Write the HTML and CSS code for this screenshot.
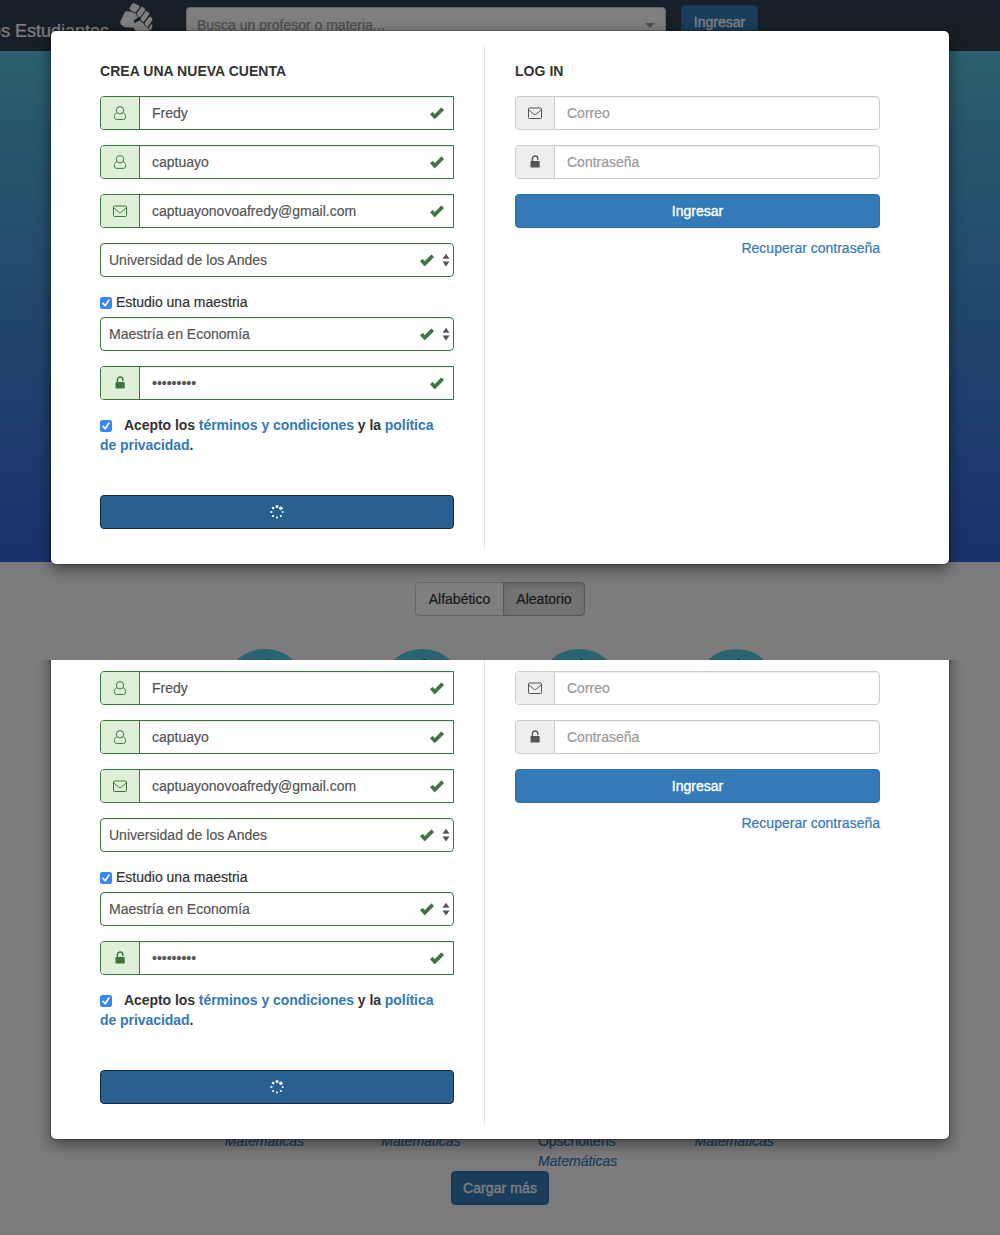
FILE: index.html
```html
<!DOCTYPE html>
<html lang="es">
<head>
<meta charset="utf-8">
<title>Los Estudiantes</title>
<link rel="stylesheet" href="styles.css">
</head>
<body>
<svg class="defs" width="0" height="0" aria-hidden="true">
  <symbol id="user" viewBox="0 0 14 14"><path d="M3.700 6.700C2 7.300 1.400 8.900 1.400 10.900c0 1.500.8 2.500 2.200 2.500h6.800c1.400 0 2.200-1 2.200-2.500 0-2-.6-3.600-2.300-4.200" fill="none" stroke="currentColor"/><circle cx="7" cy="4.300" r="3.700" fill="none" stroke="currentColor"/></symbol>
  <symbol id="mail" viewBox="0 0 14 14"><rect x=".5" y="2" width="13" height="10.500" rx=".9" fill="none" stroke="currentColor"/><path d="M.7 3.600c1.600 1.900 3.200 3 4.800 4.300 1.100.9 1.900.9 3 0 1.600-1.300 3.200-2.400 4.800-4.300" fill="none" stroke="currentColor"/></symbol>
  <symbol id="lock" viewBox="0 0 14 14"><rect x="2.500" y="6" width="9.200" height="6.600" rx=".7" fill="currentColor"/><path d="M4.400 6.500V3.700a2.700 2.700 0 0 1 5.400 0v.9" fill="none" stroke="currentColor" stroke-width="1.400" stroke-linecap="round"/></symbol>
  <symbol id="ok" viewBox="0 0 14 14"><path d="M.4 8.300 2.500 6.200l2.400 2.200L11.400 1.800l2.300 2.200-9 9.100z" fill="currentColor" stroke="currentColor" stroke-width=".7" stroke-linejoin="round"/></symbol>
  <symbol id="sort" viewBox="0 0 8 14"><path d="M.5 5.800 4 .8l3.500 5zM.5 8.400 4 13.400l3.500-5z" fill="#555"/></symbol>
  <symbol id="box" viewBox="0 0 12 12"><rect width="12" height="12" rx="2.500" fill="#3b86f7"/><path d="m3 6.400 2.200 2.400L9 3" fill="none" stroke="#fff" stroke-width="1.600" stroke-linecap="round" stroke-linejoin="round"/></symbol>
  <symbol id="spin" viewBox="0 0 14 14"><g fill="#fff"><circle cx="7" cy="1.600" r="1.500"/><circle cx="10.900" cy="3.200" r="1.800"/><circle cx="12.700" cy="7" r="1"/><circle cx="10.900" cy="11" r="1"/><circle cx="7" cy="12.600" r="1"/><circle cx="3.100" cy="11" r="1.100"/><circle cx="1.400" cy="7" r="1.100"/><circle cx="3.100" cy="3.100" r="1.300"/></g></symbol>
</svg>

<section class="screen first">
  <header class="nav">
    <div class="brand">Los Estudiantes</div>
    <svg class="fist" viewBox="360 6 99 99"><g fill="#fff" stroke="#303e4e" stroke-width="2.500">
      <path d="M380 32l12 2 13 4 11 3q6 4 1 10l-15 11 2 6 15-8 28 22q7 7 3 13l-6 12h-29l-15-23-23-1q-16-5-18-17l12-25q3-8 9-9z"/>
      <path d="M389 30q-3-4 0-8l6-11q4-5 9-2l13 7q4 3 2 7l-10 14q-4 4-8 1z"/>
      <path d="M411 37l11-15q3-4 7-2l5 4q4 3 2 7l-14 20q-3 3-6 0l-5-4q-3-4 0-10z"/>
      <path d="M423 51l12-17q3-4 7-1l5 4q4 3 1 7l-15 21q-3 4-6 1l-5-5q-3-4 1-10z"/>
      <path d="M434 67l12-16q3-4 7-1l3 3q4 3 2 8l-12 18q-3 4-6 1l-5-4q-4-4-1-9z"/>
      <path d="M446 82l8-11q4 0 5 6l-4 12q-4 4-7 0l-4-3z"/>
    </g></svg>
    <div class="search"><span>Busca un profesor o materia...</span><i class="caret"></i></div>
    <div class="btn blue">Ingresar</div>
  </header>
  <div class="hero"></div>
  <div class="order"><span class="tab">Alfabético</span><span class="tab active">Aleatorio</span></div>
  <div class="avatars"><i></i><i></i><i></i><i></i></div>
  <div class="backdrop"></div>
  <div class="modal">
    <form class="signup">
      <h4>CREA UNA NUEVA CUENTA</h4>
      <div class="field valid"><b><svg><use href="#user"/></svg></b><span>Fredy</span><svg class="ok"><use href="#ok"/></svg></div>
      <div class="field valid"><b><svg><use href="#user"/></svg></b><span>captuayo</span><svg class="ok"><use href="#ok"/></svg></div>
      <div class="field valid"><b><svg><use href="#mail"/></svg></b><span>captuayonovoafredy@gmail.com</span><svg class="ok"><use href="#ok"/></svg></div>
      <div class="select"><span>Universidad de los Andes</span><svg class="ok"><use href="#ok"/></svg><svg class="sort"><use href="#sort"/></svg></div>
      <div class="check"><svg><use href="#box"/></svg>Estudio una maestria</div>
      <div class="select"><span>Maestría en Economía</span><svg class="ok"><use href="#ok"/></svg><svg class="sort"><use href="#sort"/></svg></div>
      <div class="field valid"><b><svg><use href="#lock"/></svg></b><span>•••••••••</span><svg class="ok"><use href="#ok"/></svg></div>
      <p class="terms"><svg><use href="#box"/></svg>Acepto los <a>términos y condiciones</a> y la <a>política<br>de privacidad</a>.</p>
      <div class="btn loading"><svg><use href="#spin"/></svg></div>
    </form>
    <form class="login">
      <h4>LOG IN</h4>
      <div class="field"><b><svg><use href="#mail"/></svg></b><span>Correo</span></div>
      <div class="field"><b><svg><use href="#lock"/></svg></b><span>Contraseña</span></div>
      <div class="btn blue">Ingresar</div>
      <a class="recover">Recuperar contraseña</a>
    </form>
  </div>
</section>

<section class="screen second">
  <div class="people">
    <div><em>Matemáticas</em></div>
    <div><em>Matemáticas</em></div>
    <div>Opscholtens<br><em>Matemáticas</em></div>
    <div><em>Matemáticas</em></div>
  </div>
  <div class="btn blue more">Cargar más</div>
  <div class="backdrop"></div>
  <div class="modal">
    <form class="signup">
      <h4>CREA UNA NUEVA CUENTA</h4>
      <div class="field valid"><b><svg><use href="#user"/></svg></b><span>Fredy</span><svg class="ok"><use href="#ok"/></svg></div>
      <div class="field valid"><b><svg><use href="#user"/></svg></b><span>captuayo</span><svg class="ok"><use href="#ok"/></svg></div>
      <div class="field valid"><b><svg><use href="#mail"/></svg></b><span>captuayonovoafredy@gmail.com</span><svg class="ok"><use href="#ok"/></svg></div>
      <div class="select"><span>Universidad de los Andes</span><svg class="ok"><use href="#ok"/></svg><svg class="sort"><use href="#sort"/></svg></div>
      <div class="check"><svg><use href="#box"/></svg>Estudio una maestria</div>
      <div class="select"><span>Maestría en Economía</span><svg class="ok"><use href="#ok"/></svg><svg class="sort"><use href="#sort"/></svg></div>
      <div class="field valid"><b><svg><use href="#lock"/></svg></b><span>•••••••••</span><svg class="ok"><use href="#ok"/></svg></div>
      <p class="terms"><svg><use href="#box"/></svg>Acepto los <a>términos y condiciones</a> y la <a>política<br>de privacidad</a>.</p>
      <div class="btn loading"><svg><use href="#spin"/></svg></div>
    </form>
    <form class="login">
      <h4>LOG IN</h4>
      <div class="field"><b><svg><use href="#mail"/></svg></b><span>Correo</span></div>
      <div class="field"><b><svg><use href="#lock"/></svg></b><span>Contraseña</span></div>
      <div class="btn blue">Ingresar</div>
      <a class="recover">Recuperar contraseña</a>
    </form>
  </div>
</section>
</body>
</html>
```
FILE: styles.css
```css
* { box-sizing: border-box; }
body { margin: 0; font: 14px/20px "Liberation Sans", Arial, sans-serif; color: #333; -webkit-text-stroke: .2px; }
.defs { position: absolute; }
svg { display: block; width: 14px; height: 14px; flex: none; }

.screen { position: relative; width: 1000px; overflow: hidden; background: #f8f9fc; }
.first { height: 660px; }
.second { height: 575px; padding-top: 471px; }
.backdrop { position: absolute; inset: 0; background: rgba(0, 0, 0, .5); }

/* page behind the dialog */
.nav { display: flex; align-items: flex-start; height: 51px; background: linear-gradient(#303f54, #303e4e 40%); }
.brand { width: 109px; height: 51px; padding-top: 21px; display: flex; justify-content: flex-end; overflow: hidden; white-space: nowrap; font-size: 18px; color: #fff; }
.fist { width: 33px; height: 33px; margin: 2px 33px 0 11px; }
.search { display: flex; align-items: center; justify-content: space-between; width: 480px; height: 36px; margin: 7px 15px 0 0; padding: 0 10px; border: 1px solid #ccc; border-radius: 4px; background: #fff; color: #999; }
.caret { border: 5px solid transparent; border-top-color: #999; border-bottom: 0; }
.hero { height: 511px; background: linear-gradient(#56c2d8, #4faed9 15%, #3464de); }
.order { display: flex; justify-content: center; margin-top: 20px; }
.tab { width: 89px; height: 34px; padding: 6px 0; text-align: center; border: 1px solid #ccc; border-radius: 4px 0 0 4px; background: #fff; }
.tab.active { width: 82px; margin-left: -1px; border-color: #adadad; border-radius: 0 4px 4px 0; background: #e6e6e6; box-shadow: inset 0 3px 5px rgba(0, 0, 0, .125); }
.avatars { display: flex; justify-content: center; gap: 67px; margin-top: 30px; }
.avatars i { position: relative; width: 90px; height: 90px; border: 3px solid #fff6f6; border-radius: 50%; background: #52c8e0; }
.avatars i::after { content: ""; position: absolute; left: 43px; top: 10px; width: 3px; height: 4px; background: #267080; }
.people { display: grid; grid-template-columns: repeat(4, 156.600px); margin-left: 224.700px; color: #337ab7; }

.btn { height: 34px; padding: 6px 0; border: 1px solid; border-radius: 4px; text-align: center; color: #fff; }
.blue { background: #337ab7; border-color: #2e6da4; color: #fff; -webkit-text-stroke: .35px #fff; }
.nav .btn { margin-top: 5px; width: 77px; }
.more { width: 98px; margin: 0 auto; letter-spacing: .1px; }

/* dialog */
.modal { position: absolute; left: 51px; top: 31px; display: flex; width: 898px; height: 533px; padding: 15px 0; border-radius: 5px; background: #fff; box-shadow: 0 0 0 1px rgba(0, 0, 0, .2), 0 5px 15px rgba(0, 0, 0, .5); }
.second .modal { top: -54px; }
.signup { width: 434px; padding: 15px 30px 0 49px; border-right: 1px solid #e5e5e5; }
.login { width: 395px; padding: 15px 0 0 30px; }
h4 { margin: 0 0 15px; font-size: 14px; line-height: 20px; letter-spacing: .04px; -webkit-text-stroke: 0; }
.field, .select { display: flex; align-items: center; height: 34px; margin-bottom: 15px; border: 1px solid #ccc; border-radius: 4px; color: #999; background: #fff; box-shadow: inset 0 1px 1px rgba(0, 0, 0, .075); }
.field b { display: flex; align-items: center; justify-content: center; width: 39px; height: 32px; margin-right: 12px; border-right: 1px solid #ccc; border-radius: 3px 0 0 3px; background: #eee; color: #555; }
.field span, .select span { flex: 1; }
.field.valid { border-color: #3c763d; border-radius: 4px 0 0 4px; color: #555; padding-right: 9px; }
.valid b { border-color: #3c763d; background: #dff0d8; color: #3c763d; }
.ok { color: #3c763d; }
.select { border-color: #3c763d; color: #555; padding: 0 3px 0 8px; }
.sort { width: 8px; margin-left: 8px; }
.check { display: flex; align-items: center; gap: 4px; margin-bottom: 5px; }
.check svg, .terms svg { width: 12px; height: 12px; }
.check svg { position: relative; top: 1px; }
.terms { margin: 0 0 40px; font-weight: bold; white-space: nowrap; letter-spacing: -.055px; -webkit-text-stroke: 0; }
.terms svg { display: inline-block; margin-right: 12px; vertical-align: -2px; }
a { color: #337ab7; }
.loading { display: flex; align-items: center; justify-content: center; background: #286090; border-color: #122b40; }
.recover { display: block; margin-top: 10px; text-align: right; }
```
